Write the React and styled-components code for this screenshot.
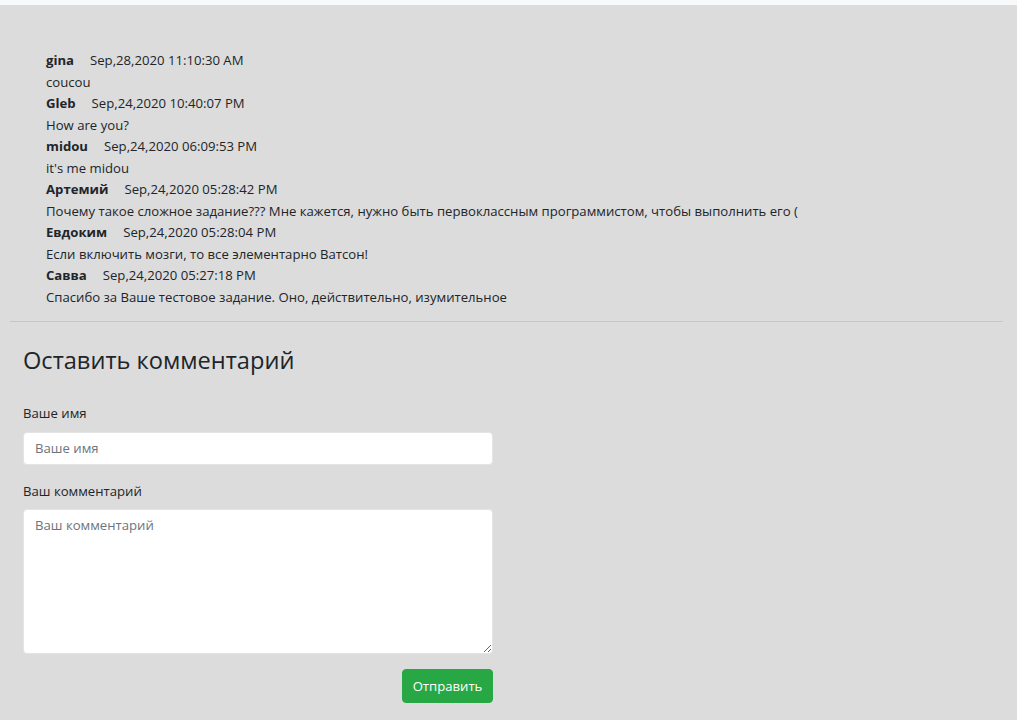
import React from 'react';
import styled, {createGlobalStyle} from 'styled-components';

const GlobalStyle = createGlobalStyle`
    html, body {
        margin: 0;
        padding: 0;
        background: #f8f9fa;
    }
    body {
        font-family: "Open Sans", "Noto Sans", sans-serif;
        color: #212529;
    }
    * { box-sizing: border-box; }
`;

const Page = styled.div`
    margin-top: 5px;
    min-height: 715px;
    background: #dcdcdc;
    padding-bottom: 16px;
`;

const CommentList = styled.div`
    padding: 45px 0 0 46px;
    font-size: 13.15px;
    line-height: 21.5px;
`;

const CommentHead = styled.div`
    display: flex;
    gap: 16px;
`;

const Author = styled.span`
    font-weight: 700;
`;

const CommentDate = styled.span``;

const CommentText = styled.div``;

const Divider = styled.hr`
    margin: 13px 14px 0 10px;
    border: 0;
    border-top: 1px solid #c6c6c6;
`;

const Form = styled.form`
    width: 470px;
    margin-left: 23px;
    display: flex;
    flex-direction: column;
`;

const Title = styled.h3`
    margin: 22px 0 0;
    font-size: 23.6px;
    font-weight: 400;
    line-height: 33px;
`;

const Label = styled.label`
    margin-top: ${props => props.first ? '26px' : '16px'};
    font-size: 13.15px;
    line-height: 21.5px;
`;

const fieldStyles = `
    width: 100%;
    margin-top: 7px;
    border: 1px solid #e4e4e4;
    border-radius: 4px;
    background: #fff;
    font-family: "Open Sans", "Noto Sans", sans-serif;
    font-size: 13.15px;
    color: #495057;
    padding: 6px 11px;
    outline: none;
    &::placeholder { color: #6c757d; }
`;

const Input = styled.input`
    ${fieldStyles}
    height: 33px;
`;

const TextArea = styled.textarea`
    ${fieldStyles}
    height: 145px;
    resize: vertical;
    display: block;
`;

const Actions = styled.div`
    display: flex;
    justify-content: flex-end;
    margin-top: 15px;
`;

const SubmitButton = styled.button`
    height: 34px;
    width: 91px;
    padding: 0;
    border: 1px solid #28a745;
    border-radius: 4px;
    background: #28a745;
    color: #fff;
    font-family: "Open Sans", "Noto Sans", sans-serif;
    font-size: 13.15px;
`;

const comments = [
    {author: 'gina', date: 'Sep,28,2020 11:10:30 AM', text: 'coucou'},
    {author: 'Gleb', date: 'Sep,24,2020 10:40:07 PM', text: 'How are you?'},
    {author: 'midou', date: 'Sep,24,2020 06:09:53 PM', text: "it's me midou"},
    {author: 'Артемий', date: 'Sep,24,2020 05:28:42 PM', text: 'Почему такое сложное задание??? Мне кажется, нужно быть первоклассным программистом, чтобы выполнить его ('},
    {author: 'Евдоким', date: 'Sep,24,2020 05:28:04 PM', text: 'Если включить мозги, то все элементарно Ватсон!'},
    {author: 'Савва', date: 'Sep,24,2020 05:27:18 PM', text: 'Спасибо за Ваше тестовое задание. Оно, действительно, изумительное'},
];

export default function App() {
    return (
        <Page>
            <GlobalStyle/>
            <CommentList>
                {comments.map((c, i) => (
                    <div key={i}>
                        <CommentHead>
                            <Author>{c.author}</Author>
                            <CommentDate>{c.date}</CommentDate>
                        </CommentHead>
                        <CommentText>{c.text}</CommentText>
                    </div>
                ))}
            </CommentList>
            <Divider/>
            <Form onSubmit={e => e.preventDefault()}>
                <Title>Оставить комментарий</Title>
                <Label first htmlFor="name">Ваше имя</Label>
                <Input id="name" type="text" placeholder="Ваше имя"/>
                <Label htmlFor="comment">Ваш комментарий</Label>
                <TextArea id="comment" placeholder="Ваш комментарий"/>
                <Actions>
                    <SubmitButton type="submit">Отправить</SubmitButton>
                </Actions>
            </Form>
        </Page>
    );
}
